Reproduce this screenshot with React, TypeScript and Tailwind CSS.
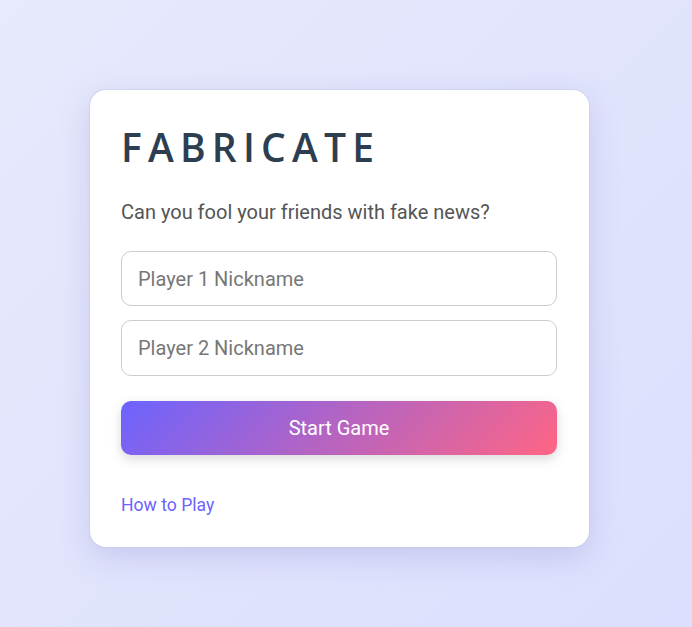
import React from "react";

const App = () => {
  return (
    <div className="min-h-[627px] w-full bg-[linear-gradient(135deg,#e7e9fc_0%,#dcdffd_100%)] pt-[90px] pl-[90px] font-['Roboto',sans-serif]">
      <div className="w-[499px] h-[457px] rounded-[16px] bg-white shadow-[0_0_0_1px_rgba(200,200,225,0.5),0_10px_30px_rgba(120,120,200,0.25)] pl-[31px] pr-[32px] pt-[33px]">
        <h1 className="font-['Open_Sans',sans-serif] text-[39px] leading-[48px] font-semibold tracking-[6.2px] text-[#2c3e50]">
          FABRICATE
        </h1>
        <p className="mt-[27px] text-[20px] leading-[28px] text-[#555]">
          Can you fool your friends with fake news?
        </p>
        <div className="mt-[25px] flex flex-col gap-[14px]">
          <input
            placeholder="Player 1 Nickname"
            className="h-[55px] w-full rounded-[10px] border border-[#ccc] px-[16px] text-[20px] text-[#333] placeholder:text-[#777] outline-none"
          />
          <input
            placeholder="Player 2 Nickname"
            className="h-[56px] w-full rounded-[10px] border border-[#ccc] px-[16px] text-[20px] text-[#333] placeholder:text-[#777] outline-none"
          />
        </div>
        <button className="mt-[25px] h-[54px] w-full rounded-[10px] bg-[linear-gradient(135deg,#6c63ff_0%,#ff6584_100%)] text-[20px] text-white shadow-[0_4px_12px_rgba(0,0,0,0.15)]">
          Start Game
        </button>
        <div className="mt-[38px]">
          <a className="text-[17.6px] leading-[24px] text-[#6c63ff] cursor-pointer">How to Play</a>
        </div>
      </div>
    </div>
  );
};

export default App;
